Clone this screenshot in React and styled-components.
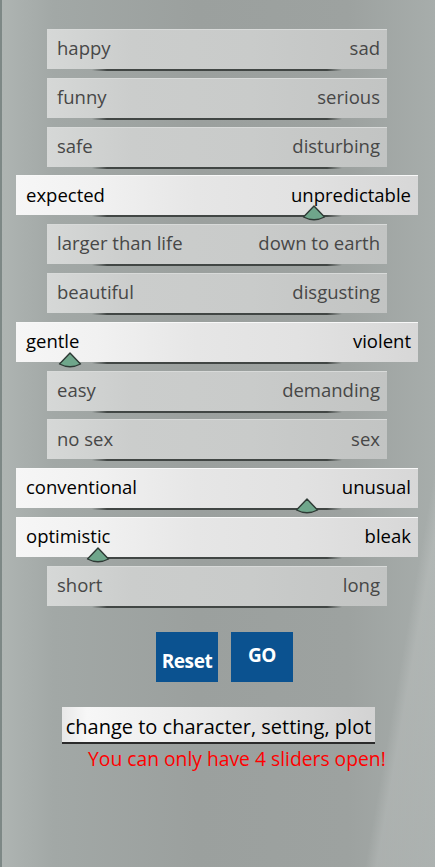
import React from "react";
import styled, { createGlobalStyle } from "styled-components";

const GlobalStyle = createGlobalStyle`
  html, body { margin: 0; padding: 0; }
  body { background: #9fa4a2; font-family: "Open Sans", "DejaVu Sans", sans-serif; }
`;

const Page = styled.div`
  position: relative;
  width: 435px;
  height: 867px;
  overflow: hidden;
  box-sizing: border-box;
  padding-top: 29px;
  border-left: 2px solid #7d8886;
  background:
    linear-gradient(100deg, rgba(255,255,255,0) 0%, rgba(255,255,255,0) 88%, rgba(255,255,255,0.12) 90%, rgba(255,255,255,0.06) 100%),
    linear-gradient(90deg, #aeb4b2 0%, #a2a8a6 12%, #9ba09e 45%, #9da2a0 80%, #a7adab 100%);
  display: flex;
  flex-direction: column;
  align-items: flex-start;
`;

const List = styled.div`
  width: 402px;
  margin-left: 14px;
  display: flex;
  flex-direction: column;
  gap: 8.8px;
`;

const Row = styled.div`
  position: relative;
  height: 40px;
  margin: 0 ${(p) => (p.$open ? 0 : 31)}px;
  padding: 0 7px 2px 10px;
  display: flex;
  align-items: center;
  justify-content: space-between;
  font-size: 18.5px;
  color: ${(p) => (p.$open ? "#000" : "#474747")};
  background: ${(p) =>
    p.$open
      ? "linear-gradient(90deg, #f6f6f6 0%, #f1f1f1 20%, #e6e6e6 45%, #e2e2e2 70%, #d7d7d7 100%)"
      : "linear-gradient(90deg, #d6d8d7 0%, #cbcdcc 25%, #c9cbca 60%, #c2c4c3 100%)"};
  border-top: 1px solid ${(p) => (p.$open ? "#f8f8f8" : "#d8dad9")};
  box-sizing: border-box;

  &::after {
    content: "";
    position: absolute;
    left: 50%;
    transform: translateX(-50%);
    bottom: -2px;
    width: 250px;
    height: 2px;
    background: linear-gradient(90deg, rgba(55,60,58,0) 0%, rgba(55,60,58,0.9) 6%, rgba(55,60,58,0.9) 94%, rgba(55,60,58,0) 100%);
  }
`;

const Label = styled.span`
  line-height: 1;
  white-space: nowrap;
`;

const Thumb = styled.svg`
  position: absolute;
  bottom: -6px;
  width: 24px;
  height: 16px;
  transform: translateX(-50%);
  z-index: 2;
`;

const Buttons = styled.div`
  display: flex;
  gap: 13px;
  margin: 26px 0 0 154px;
`;

const BlueButton = styled.button`
  width: 62px;
  height: 50px;
  border: none;
  background: #0b5290;
  color: #fff;
  font-family: "Open Sans", sans-serif;
  font-weight: 700;
  font-size: 19px;
  padding: ${(p) => (p.$low ? "8px 0 0" : "0 0 4px")};
  letter-spacing: -0.4px;
`;

const ChangeButton = styled.button`
  margin: 25px 0 0 60px;
  width: 313px;
  height: 37px;
  border: none;
  border-bottom: 2px solid #2b2b2b;
  background: linear-gradient(90deg, #e8e8e8 0%, #f7f7f7 8%, #ececec 40%, #dcdcdc 80%, #d2d2d2 100%);
  color: #000;
  font-family: "Open Sans", sans-serif;
  font-size: 20px;
  padding: 4px 0 0;
  white-space: nowrap;
`;

const Warning = styled.div`
  margin: 3px 0 0 86px;
  color: #ff0000;
  font-size: 19.3px;
  line-height: 24px;
`;

const rows = [
  ["happy", "sad"],
  ["funny", "serious"],
  ["safe", "disturbing"],
  ["expected", "unpredictable", 298],
  ["larger than life", "down to earth"],
  ["beautiful", "disgusting"],
  ["gentle", "violent", 54],
  ["easy", "demanding"],
  ["no sex", "sex"],
  ["conventional", "unusual", 291],
  ["optimistic", "bleak", 82],
  ["short", "long"],
];

function SliderThumb({ left }) {
  return (
    <Thumb viewBox="0 0 24 16" style={{ left }}>
      <path
        d="M12 1 L22.5 12 Q12 17.5 1.5 12 Z"
        fill="#6fa68b"
        stroke="#2e3a35"
        strokeWidth="1.4"
        strokeLinejoin="round"
      />
    </Thumb>
  );
}

export default function App() {
  return (
    <>
      <GlobalStyle />
      <Page>
        <List>
          {rows.map(([l, r, pos]) => (
            <Row key={l} $open={pos !== undefined}>
              <Label>{l}</Label>
              <Label>{r}</Label>
              {pos !== undefined && <SliderThumb left={pos} />}
            </Row>
          ))}
        </List>
        <Buttons>
          <BlueButton $low>Reset</BlueButton>
          <BlueButton>GO</BlueButton>
        </Buttons>
        <ChangeButton>change to character, setting, plot</ChangeButton>
        <Warning>You can only have 4 sliders open!</Warning>
      </Page>
    </>
  );
}
